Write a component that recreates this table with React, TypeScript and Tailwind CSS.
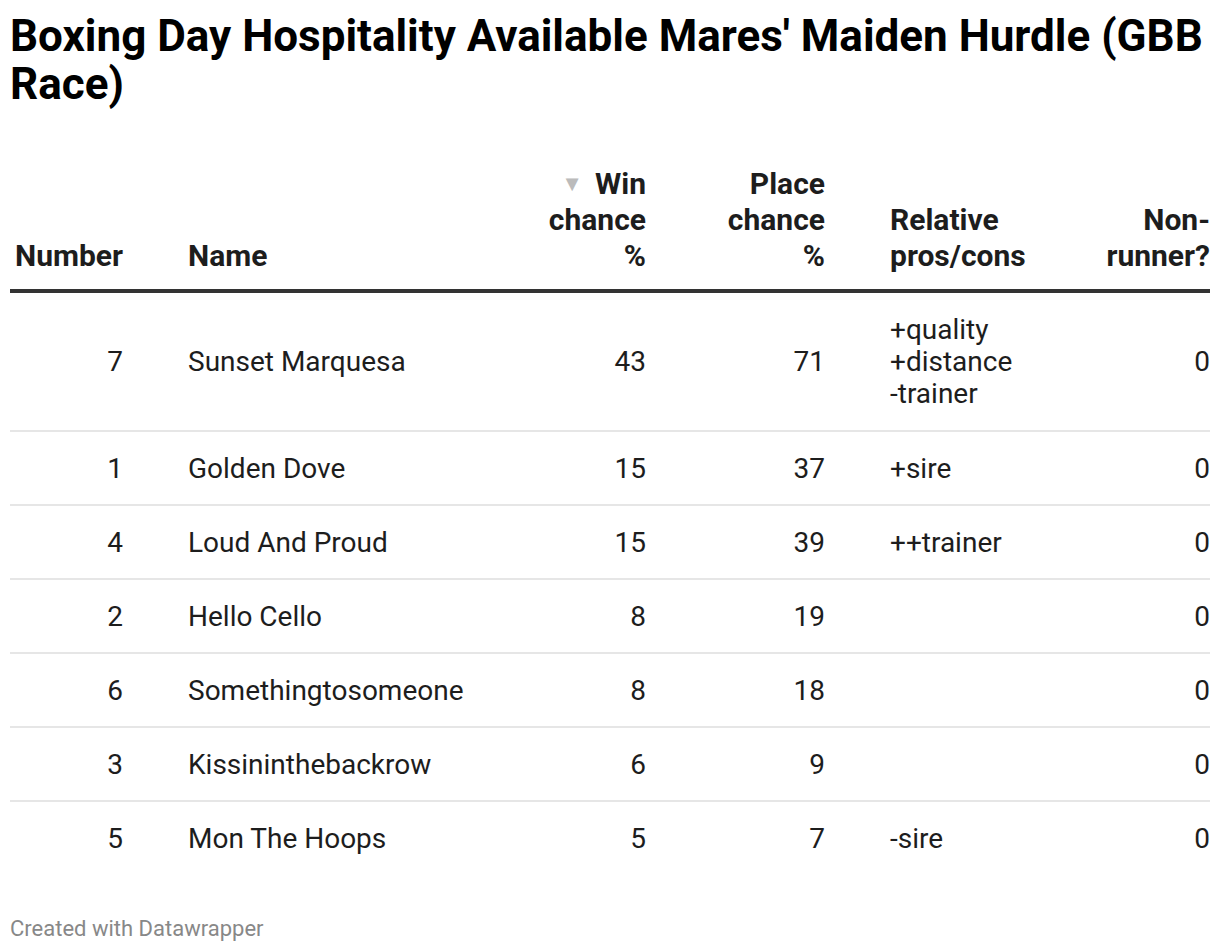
import React from 'react'

type Runner = {
  num: number
  name: string
  win: number
  place: number
  notes: string[]
  nr: number
}

const runners: Runner[] = [
  { num: 7, name: 'Sunset Marquesa', win: 43, place: 71, notes: ['+quality', '+distance', '-trainer'], nr: 0 },
  { num: 1, name: 'Golden Dove', win: 15, place: 37, notes: ['+sire'], nr: 0 },
  { num: 4, name: 'Loud And Proud', win: 15, place: 39, notes: ['++trainer'], nr: 0 },
  { num: 2, name: 'Hello Cello', win: 8, place: 19, notes: [], nr: 0 },
  { num: 6, name: 'Somethingtosomeone', win: 8, place: 18, notes: [], nr: 0 },
  { num: 3, name: 'Kissininthebackrow', win: 6, place: 9, notes: [], nr: 0 },
  { num: 5, name: 'Mon The Hoops', win: 5, place: 7, notes: ['-sire'], nr: 0 },
]

export default function App() {
  return (
    <div className="w-[1220px] h-[950px] bg-white px-[10px] pt-[12px] font-['Roboto',sans-serif] text-[#1d1d1d]">
      <h1 className="text-[44px] leading-[48px] font-bold text-black">
        Boxing Day Hospitality Available Mares' Maiden Hurdle (GBB Race)
      </h1>

      <table className="mt-[58px] w-[1200px] table-fixed border-collapse">
        <thead>
          <tr className="border-b-4 border-[#333333] text-[30px] leading-[36px] font-bold align-bottom">
            <th className="w-[113px] pb-[15px] text-right font-bold">Number</th>
            <th className="w-[417px] pb-[15px] pl-[65px] text-left font-bold">Name</th>
            <th className="w-[106px] pb-[15px] text-right font-bold">
              <span className="text-[#bbbbbb] text-[22px] mr-[12px] align-[3px]">▼</span>Win
              <br />
              chance
              <br />%
            </th>
            <th className="w-[179px] pb-[15px] text-right font-bold">
              Place
              <br />
              chance
              <br />%
            </th>
            <th className="w-[225px] pb-[15px] pl-[65px] text-left font-bold">
              Relative
              <br />
              pros/cons
            </th>
            <th className="w-[160px] pb-[15px] text-right font-bold">
              Non-
              <br />
              runner?
            </th>
          </tr>
        </thead>
        <tbody className="text-[28px] leading-[32px]">
          {runners.map((r, i) => {
            const pad = i === 0 ? 'pt-[21px] pb-[20px]' : 'pt-[21px] pb-[19px]'
            return (
              <tr
                key={r.num}
                className={i < runners.length - 1 ? 'border-b-2 border-[#e6e6e6] align-middle' : 'align-middle'}
              >
                <td className={`${pad} text-right`}>{r.num}</td>
                <td className={`${pad} pl-[65px]`}>{r.name}</td>
                <td className={`${pad} text-right`}>{r.win}</td>
                <td className={`${pad} text-right`}>{r.place}</td>
                <td className={`${pad} pl-[65px]`}>
                  {r.notes.map((n) => (
                    <div key={n}>{n}</div>
                  ))}
                </td>
                <td className={`${pad} text-right`}>{r.nr}</td>
              </tr>
            )
          })}
        </tbody>
      </table>

      <div className="mt-[42px] text-[22px] leading-[26px] text-[#888888]">Created with Datawrapper</div>
    </div>
  )
}
